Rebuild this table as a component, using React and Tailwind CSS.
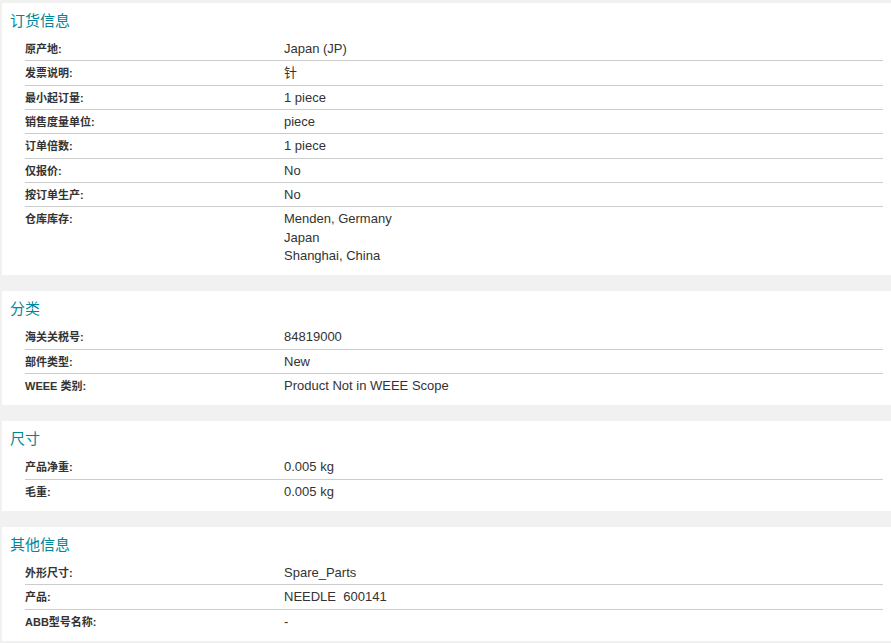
import React from 'react';

const sections = [
  {
    title: '订货信息',
    rows: [
      ['原产地:', 'Japan (JP)'],
      ['发票说明:', '针'],
      ['最小起订量:', '1 piece'],
      ['销售度量单位:', 'piece'],
      ['订单倍数:', '1 piece'],
      ['仅报价:', 'No'],
      ['按订单生产:', 'No'],
      ['仓库库存:', ['Menden, Germany', 'Japan', 'Shanghai, China']],
    ],
  },
  {
    title: '分类',
    rows: [
      ['海关关税号:', '84819000'],
      ['部件类型:', 'New'],
      ['WEEE 类别:', 'Product Not in WEEE Scope'],
    ],
  },
  {
    title: '尺寸',
    rows: [
      ['产品净重:', '0.005 kg'],
      ['毛重:', '0.005 kg'],
    ],
  },
  {
    title: '其他信息',
    rows: [
      ['外形尺寸:', 'Spare_Parts'],
      ['产品:', 'NEEDLE  600141'],
      ['ABB型号名称:', '-'],
    ],
  },
];

function Row({ label, value, last }) {
  return (
    <div
      className={`grid grid-cols-[259px_1fr] pt-[3px] pb-[2px] leading-[18.33px] ${
        last ? '' : 'border-b border-[#cccccc]'
      }`}
    >
      <div className="text-[11px] font-bold text-[#333333]">{label}</div>
      <div className="text-[13px] text-[#333333] whitespace-pre-wrap">
        {Array.isArray(value) ? value.map((v) => <div key={v}>{v}</div>) : value}
      </div>
    </div>
  );
}

export default function App() {
  return (
    <div
      className="min-h-screen bg-[#f1f1f1] pt-[3px] pl-[2px] flex flex-col gap-[16px]"
      style={{ fontFamily: '"Liberation Sans", Arial, "Noto Sans CJK SC", sans-serif' }}
    >
      {sections.map((s) => (
        <div key={s.title} className="bg-white pb-[8px]">
          <div className="pl-[8px] pt-[9px] pb-[7px] leading-[18px] text-[15px] text-[#00869a]">
            {s.title}
          </div>
          <div className="ml-[23px] mr-[8px]">
            {s.rows.map(([label, value], i) => (
              <Row key={label} label={label} value={value} last={i === s.rows.length - 1} />
            ))}
          </div>
        </div>
      ))}
    </div>
  );
}
